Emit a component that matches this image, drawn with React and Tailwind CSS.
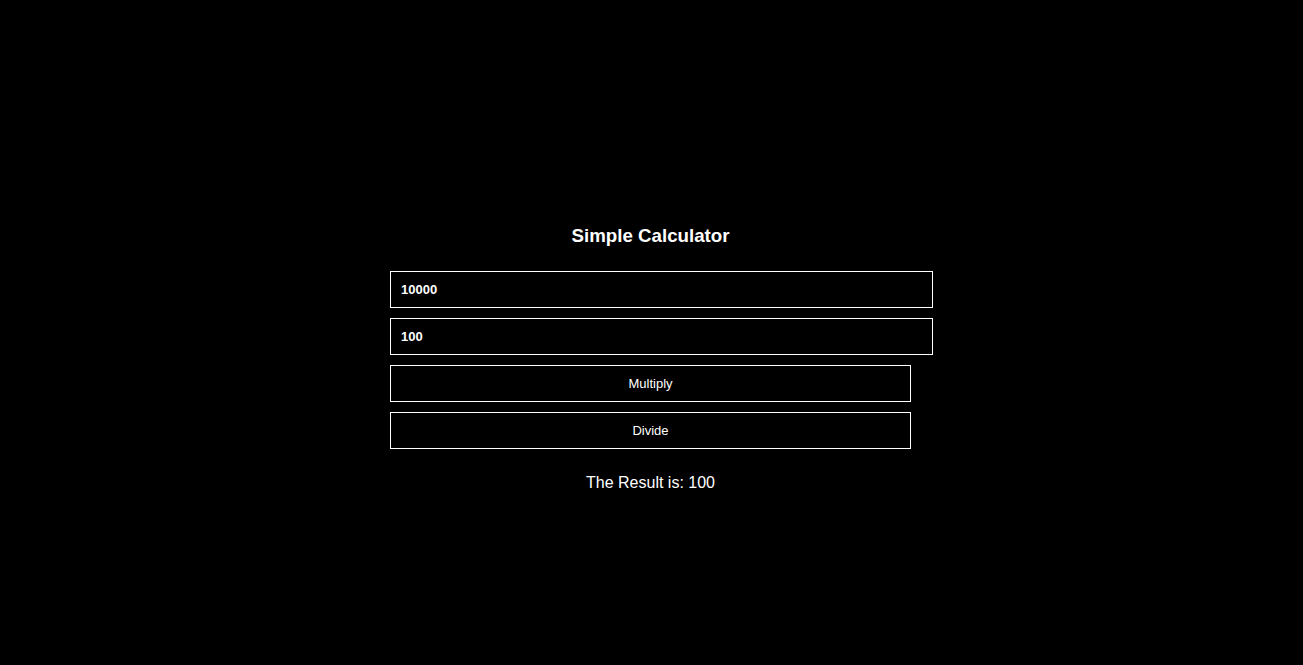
import React, { useState } from "react";

export default function App() {
  const [a, setA] = useState("10000");
  const [b, setB] = useState("100");
  const [result, setResult] = useState(100);

  const field =
    "box-border w-[543px] h-[37px] px-[10px] bg-black border border-white text-white text-[13px] font-bold outline-none";
  const btn =
    "box-border w-[521px] h-[37px] bg-black border border-white text-white text-[13px] font-medium cursor-pointer";

  return (
    <div className="min-h-screen bg-black text-white font-['Liberation_Sans',Arial,sans-serif]">
      <div className="pt-[225px] flex flex-col items-center">
        <h1 className="text-[18.72px] leading-[22px] font-bold ml-[-2px]">Simple Calculator</h1>
        <div className="w-[521px] mt-[24px] mr-[2px] flex flex-col gap-[10px]">
          <input className={field} value={a} onChange={(e) => setA(e.target.value)} />
          <input className={field} value={b} onChange={(e) => setB(e.target.value)} />
          <button className={btn} onClick={() => setResult(Number(a) * Number(b))}>
            Multiply
          </button>
          <button className={btn} onClick={() => setResult(Number(a) / Number(b))}>
            Divide
          </button>
        </div>
        <p className="mt-[24px] text-[16px] leading-[19px] ml-[-2px]">The Result is: {result}</p>
      </div>
    </div>
  );
}
